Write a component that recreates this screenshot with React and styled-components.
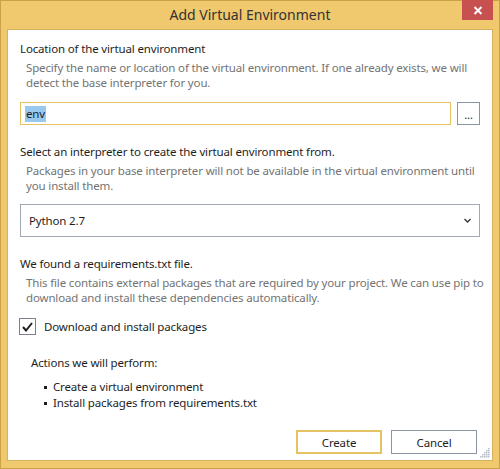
import React from "react";
import styled, { createGlobalStyle } from "styled-components";

const GlobalStyle = createGlobalStyle`
  html, body {
    margin: 0;
    padding: 0;
    background: #efc76c;
  }
  * { box-sizing: border-box; }
`;

const Window = styled.div`
  width: 500px;
  height: 469px;
  background: #f0c86d;
  border: 1px solid #c9a247;
  display: flex;
  flex-direction: column;
  font-family: "Noto Sans", "Open Sans", sans-serif;
  font-size: 11.5px;
  letter-spacing: -0.15px;
`;

const TitleBar = styled.div`
  height: 28px;
  display: grid;
  grid-template-columns: 1fr auto 1fr;
  align-items: start;
`;

const Title = styled.div`
  grid-column: 2;
  padding-top: 4px;
  font-size: 14px;
  letter-spacing: 0;
  color: #333333;
`;

const CloseButton = styled.div`
  grid-column: 3;
  justify-self: end;
  margin-right: 6px;
  margin-top: -1px;
  width: 31px;
  height: 20px;
  background: #c75050;
  display: flex;
  align-items: center;
  justify-content: center;
`;

const Client = styled.div`
  flex: 1;
  margin: 0 6px 7px 6px;
  background: #ffffff;
  border: 1px solid #d6b260;
  padding: 11px 12px 6px 12px;
  display: flex;
  flex-direction: column;
  position: relative;
`;

const Section = styled.div`
  display: flex;
  flex-direction: column;
  margin-bottom: ${(p) => p.gap || 0}px;
`;

const Heading = styled.div`
  color: #1e1e1e;
  line-height: 16px;
`;

const Hint = styled.div`
  color: #737373;
  line-height: 15px;
  padding: 3px 0 0 6px;
  white-space: nowrap;
`;

const InputRow = styled.div`
  display: flex;
  gap: 6px;
  margin-top: 12px;
`;

const TextBox = styled.div`
  flex: 0 0 431px;
  height: 23px;
  border: 1px solid #e5c365;
  display: flex;
  align-items: center;
  padding-left: 4px;
`;

const Selected = styled.span`
  background: #99c9ef;
  color: #1e1e1e;
  line-height: 16px;
  padding: 0 1px;
`;

const SmallButton = styled.div`
  width: 23px;
  height: 23px;
  border: 1px solid #8a94a3;
  display: flex;
  align-items: flex-end;
  justify-content: center;
  padding-bottom: 5px;
  font-size: 11px;
  line-height: 8px;
  color: #222;
`;

const Select = styled.div`
  margin-top: 11px;
  height: 33px;
  border: 1px solid #a2a9b5;
  display: flex;
  align-items: center;
  justify-content: space-between;
  padding: 0 8px 0 8px;
  color: #1e1e1e;
`;

const CheckRow = styled.div`
  display: flex;
  align-items: center;
  gap: 8px;
  margin-top: 13px;
  margin-left: -1px;
`;

const CheckBox = styled.div`
  width: 17px;
  height: 17px;
  border: 1px solid #7a8090;
  display: flex;
  align-items: center;
  justify-content: center;
`;

const Label = styled.span`
  color: #1e1e1e;
`;

const Actions = styled.div`
  margin-top: 20px;
  padding-left: 11px;
  color: #1e1e1e;
  line-height: 16px;
`;

const BulletList = styled.ul`
  list-style: none;
  margin: 8px 0 0 0;
  padding: 0 0 0 13px;
`;

const Bullet = styled.li`
  display: flex;
  align-items: center;
  line-height: 16px;
  &::before {
    content: "";
    width: 3px;
    height: 3px;
    background: #1e1e1e;
    margin-right: 6px;
  }
`;

const Footer = styled.div`
  margin-top: auto;
  display: flex;
  justify-content: flex-end;
  gap: 9px;
  padding-right: 3px;
`;

const DialogButton = styled.div`
  width: 86px;
  height: 24px;
  border: ${(p) => (p.primary ? "2px solid #e5c365" : "1px solid #8a94a3")};
  display: flex;
  align-items: center;
  justify-content: center;
  color: #1e1e1e;
`;

const Grip = styled.svg`
  position: absolute;
  right: 2px;
  bottom: 2px;
`;

const gripDots = [[8, 0], [6, 2], [8, 2], [4, 4], [6, 4], [8, 4], [2, 6], [4, 6], [6, 6], [8, 6], [0, 8], [2, 8], [4, 8], [6, 8], [8, 8]];

export default function App() {
  return (
    <>
      <GlobalStyle />
      <Window>
        <TitleBar>
          <Title>Add Virtual Environment</Title>
          <CloseButton>
            <svg width="10" height="9" viewBox="0 0 10 9">
              <path d="M1.5 1 L8.5 8 M8.5 1 L1.5 8" stroke="#fff" strokeWidth="2" />
            </svg>
          </CloseButton>
        </TitleBar>
        <Client>
          <Section gap={19}>
            <Heading>Location of the virtual environment</Heading>
            <Hint>
              Specify the name or location of the virtual environment. If one already exists, we will
              <br />
              detect the base interpreter for you.
            </Hint>
            <InputRow>
              <TextBox>
                <Selected>env</Selected>
              </TextBox>
              <SmallButton>...</SmallButton>
            </InputRow>
          </Section>
          <Section gap={19}>
            <Heading>Select an interpreter to create the virtual environment from.</Heading>
            <Hint>
              Packages in your base interpreter will not be available in the virtual environment until
              <br />
              you install them.
            </Hint>
            <Select>
              <span>Python 2.7</span>
              <svg width="7" height="5" viewBox="0 0 7 5">
                <path d="M0.5 1 L3.5 4 L6.5 1" stroke="#333" strokeWidth="1.3" fill="none" />
              </svg>
            </Select>
          </Section>
          <Section>
            <Heading>We found a requirements.txt file.</Heading>
            <Hint>
              This file contains external packages that are required by your project. We can use pip to
              <br />
              download and install these dependencies automatically.
            </Hint>
            <CheckRow>
              <CheckBox>
                <svg width="11" height="10" viewBox="0 0 11 10">
                  <path d="M1 5 L4 8.5 L10 1" stroke="#1e1e1e" strokeWidth="2" fill="none" />
                </svg>
              </CheckBox>
              <Label>Download and install packages</Label>
            </CheckRow>
          </Section>
          <Actions>
            Actions we will perform:
            <BulletList>
              <Bullet>Create a virtual environment</Bullet>
              <Bullet>Install packages from requirements.txt</Bullet>
            </BulletList>
          </Actions>
          <Footer>
            <DialogButton primary>Create</DialogButton>
            <DialogButton>Cancel</DialogButton>
          </Footer>
          <Grip width="10" height="10" viewBox="0 0 10 10">
            {gripDots.map(([x, y], i) => (
              <rect key={i} x={x} y={y} width="1.5" height="1.5" fill="#b8bfca" />
            ))}
          </Grip>
        </Client>
      </Window>
    </>
  );
}
